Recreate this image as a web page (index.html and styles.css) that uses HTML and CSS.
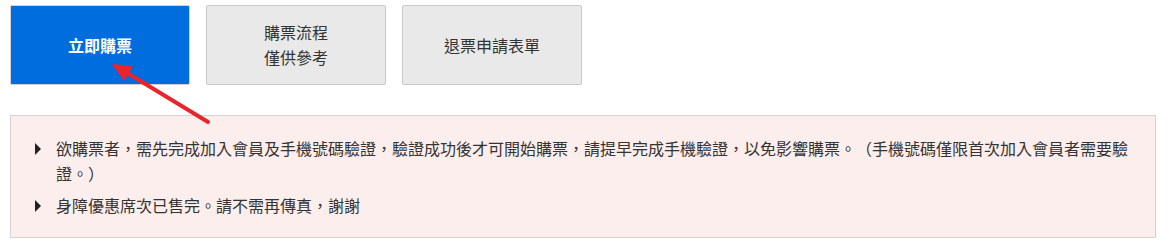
FILE: index.html
```html
<!DOCTYPE html>
<html lang="zh-Hant">
  <head>
    <meta charset="UTF-8" />
    <title>購票</title>
    <link rel="stylesheet" href="styles.css">
  </head>
  <body>
    <div class="page">
      <div class="btn-row">
        <a class="btn btn-primary" href="#">立即購票</a>
        <a class="btn" href="#">購票流程<br>僅供參考</a>
        <a class="btn" href="#">退票申請表單</a>
      </div>

      <ul class="notice">
        <li>欲購票者，需先完成加入會員及手機號碼驗證，驗證成功後才可開始購票，請提早完成手機驗證，以免影響購票。（手機號碼僅限首次加入會員者需要驗證。）</li>
        <li>身障優惠席次已售完。請不需再傳真，謝謝</li>
      </ul>

      <!-- annotation arrow pointing at the buy button -->
      <svg class="arrow" width="1171" height="245" viewBox="0 0 1171 245">
        <line x1="208" y1="122" x2="124" y2="71" stroke="#e8242c" stroke-width="4" stroke-linecap="round" />
        <polygon points="112,64 133,66 124,81" fill="#e8242c" />
      </svg>
    </div>
  </body>
</html>
```

FILE: styles.css
```css
* {
  margin: 0;
  padding: 0;
  box-sizing: border-box;
}

body {
  font-family: "Noto Sans CJK TC", "Noto Sans", sans-serif;
  color: #333;
  background: #fff;
  text-spacing-trim: space-all;
}

.page {
  position: relative;
  padding: 5px 15px 0 10px;
}

.btn-row {
  display: flex;
  gap: 16px;
}

.btn {
  width: 180px;
  height: 80px;
  display: flex;
  align-items: center;
  justify-content: center;
  text-align: center;
  font-size: 16px;
  line-height: 25px;
  color: #333;
  text-decoration: none;
  background: #e9e9e9;
  border: 1px solid #c8c8c8;
  border-radius: 2px;
}

.btn-primary {
  background: #006ddf;
  border-color: #d0d0d0;
  color: #fff;
  font-weight: bold;
}

.notice {
  list-style: none;
  margin-top: 30px;
  width: 1146px;
  padding: 20px 20px 19px 24px;
  background: #fdeeee;
  border: 1px solid #d2d2d2;
  font-size: 16px;
  line-height: 25px;
}

.notice li {
  display: flex;
  gap: 15px;
}

.notice li + li {
  margin-top: 7px;
}

.notice li::before {
  content: '';
  flex: none;
  margin-top: 7px;
  width: 0;
  height: 0;
  border-left: 6px solid #222;
  border-top: 6px solid transparent;
  border-bottom: 6px solid transparent;
}

.arrow {
  position: absolute;
  top: 0;
  left: 0;
  pointer-events: none;
}
```
